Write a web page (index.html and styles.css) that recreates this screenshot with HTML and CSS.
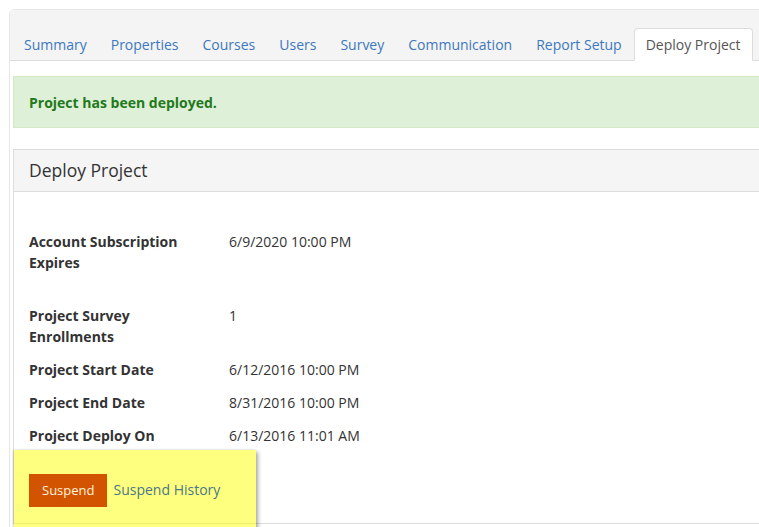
FILE: index.html
```html
<!DOCTYPE html>
<html lang="en">
<head>
  <meta charset="UTF-8">
  <meta name="viewport" content="width=device-width, initial-scale=1.0">
  <title>Deploy Project</title>
  <link rel="stylesheet" href="styles.css">
</head>
<body>
  <div class="project">
    <!-- Tabs -->
    <ul class="tabs">
      <li><a href="#">Summary</a></li>
      <li><a href="#">Properties</a></li>
      <li><a href="#">Courses</a></li>
      <li><a href="#">Users</a></li>
      <li><a href="#">Survey</a></li>
      <li><a href="#">Communication</a></li>
      <li><a href="#">Report Setup</a></li>
      <li class="active"><a href="#">Deploy Project</a></li>
    </ul>

    <div class="tab-content">
      <div class="alert">Project has been deployed.</div>

      <div class="panel">
        <div class="panel-heading">Deploy Project</div>
        <div class="panel-body">
          <table class="details">
            <tr class="first">
              <td class="label">Account Subscription<br>Expires</td>
              <td>6/9/2020 10:00 PM</td>
            </tr>
            <tr>
              <td class="label">Project Survey<br>Enrollments</td>
              <td>1</td>
            </tr>
            <tr>
              <td class="label">Project Start Date</td>
              <td>6/12/2016 10:00 PM</td>
            </tr>
            <tr>
              <td class="label">Project End Date</td>
              <td>8/31/2016 10:00 PM</td>
            </tr>
            <tr>
              <td class="label">Project Deploy On</td>
              <td>6/13/2016 11:01 AM</td>
            </tr>
          </table>

          <div class="actions">
            <button class="btn-suspend">Suspend</button>
            <a href="#" class="history-link">Suspend History</a>
          </div>
        </div>
      </div>
    </div>
  </div>
</body>
</html>
```

FILE: styles.css
```css
body {
  font-family: 'Open Sans', 'Noto Sans', sans-serif;
  font-size: 14px;
  color: #333;
  margin: 0;
  padding: 0;
  overflow: hidden;
}

a {
  text-decoration: none;
}

/* Khung ngoài */
.project {
  margin: 9px 0 0 9px;
  width: 820px;
  height: 600px;
  border: 1px solid #e6e6e6;
  border-radius: 6px 0 0 0;
  background-color: #fff;
}

/* Tabs */
.tabs {
  list-style: none;
  margin: 0;
  padding: 18px 0 0 2px;
  display: flex;
  background-color: #f4f4f4;
  border-bottom: 1px solid #ddd;
  border-radius: 5px 0 0 0;
}

.tabs li {
  margin-bottom: -1px;
}

.tabs a {
  display: block;
  padding: 5px 11px;
  line-height: 21px;
  border: 1px solid transparent;
  border-radius: 4px 4px 0 0;
  color: #3d78be;
}

.tabs li.active a {
  background-color: #fff;
  border-color: #ddd #ddd transparent;
  color: #555;
}

.tab-content {
  padding: 15px 0 0 3px;
}

/* Thông báo */
.alert {
  background-color: #dff0d8;
  border: 1px solid #d6e9c6;
  padding: 15px 15px 14px;
  line-height: 21px;
  color: #22791b;
  font-weight: bold;
  margin-bottom: 21px;
}

/* Panel */
.panel {
  border: 1px solid #ddd;
}

.panel-heading {
  background-color: #f5f5f5;
  border-bottom: 1px solid #ddd;
  padding: 10px 15px;
  font-size: 17.5px;
  line-height: 21px;
}

.panel-body {
  box-sizing: border-box;
  height: 331px;
  padding: 33px 15px 0;
}

.details {
  border-collapse: collapse;
}

.details td {
  padding: 6px 0;
  line-height: 21px;
  vertical-align: top;
}

.details td.label {
  width: 200px;
  font-weight: bold;
}

.details tr.first td {
  padding-bottom: 26px;
}

/* Vùng nút được tô vàng */
.actions {
  position: relative;
  box-sizing: border-box;
  width: 242px;
  height: 80px;
  margin: -2px 0 0 -15px;
  padding: 24px 0 0 15px;
  background-color: rgba(255, 255, 0, 0.5);
  box-shadow: 2px 2px 4px rgba(0, 0, 0, 0.35), -1px 0 2px rgba(0, 0, 0, 0.12);
  display: flex;
  align-items: flex-start;
}

.btn-suspend {
  font-family: inherit;
  font-size: 13px;
  line-height: 21px;
  padding: 6px 13px;
  border: none;
  background-color: #d35400;
  color: #fff3dc;
  cursor: pointer;
}

.history-link {
  margin-left: 6px;
  line-height: 31px;
  color: #4a7886;
}
```
